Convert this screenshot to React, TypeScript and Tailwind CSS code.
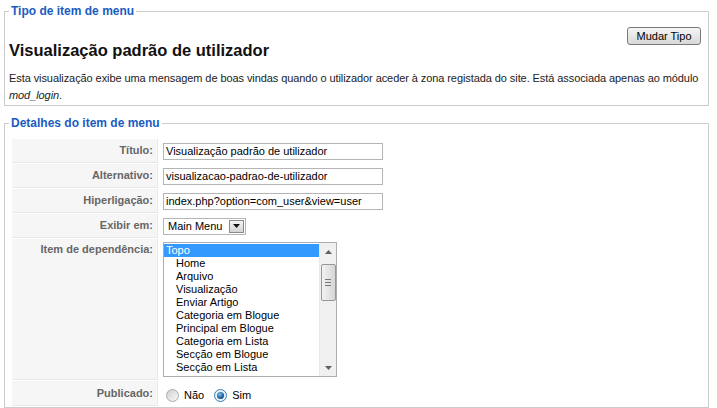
import React from "react";

const items = [
  "Home",
  "Arquivo",
  "Visualização",
  "Enviar Artigo",
  "Categoria em Blogue",
  "Principal em Blogue",
  "Categoria em Lista",
  "Secção em Blogue",
  "Secção em Lista",
  "",
];

function Label({ children, top = false }: { children: React.ReactNode; top?: boolean }) {
  return (
    <td
      className={`w-[146px] bg-[#f6f6f6] border-b border-r border-[#e9e9e9] text-right pr-[4px] font-bold text-[#666] text-[11px] leading-[13px] ${
        top ? "align-top pt-[4px]" : "align-middle"
      }`}
    >
      {children}
    </td>
  );
}

function TextInput({ value }: { value: string }) {
  return (
    <div className="w-[220px] h-[17px] border border-[#b5b5b5] bg-white px-[2px] text-[11px] leading-[15px] text-black whitespace-nowrap overflow-hidden">
      {value}
    </div>
  );
}

function Radio({ checked }: { checked?: boolean }) {
  return (
    <span
      className={`inline-flex items-center justify-center w-[13px] h-[13px] rounded-full border ${
        checked ? "border-[#3c7fb1] bg-[#e6f1fa]" : "border-[#a9a9a9] bg-gradient-to-br from-[#d0d0d0] to-[#fafafa]"
      }`}
    >
      {checked && (
        <span className="w-[7px] h-[7px] rounded-full bg-[radial-gradient(circle_at_40%_35%,#7fc4f0,#1a5a96_60%,#0d3d6e)]" />
      )}
    </span>
  );
}

export default function App() {
  return (
    <div className="w-[717px] h-[408px] overflow-hidden bg-white pl-[4px] pr-[8px] pt-[4px] text-[#333] font-['Liberation_Sans',Arial,sans-serif]">
      <fieldset className="border border-[#cccccc] pl-[4px] pr-[3px] pb-[1px]">
        <legend className="px-[2px] text-[12px] font-bold leading-[15px] text-[#1a5cc2]">
          Tipo de item de menu
        </legend>
        <div className="flex justify-between items-start pr-[4px]">
          <h2 className="mt-[21px] text-[16.5px] font-bold leading-[20px] text-[#111]">
            Visualização padrão de utilizador
          </h2>
          <button className="mt-[8px] w-[74px] h-[18px] rounded-[3px] border border-[#7a7a7a] bg-gradient-to-b from-[#f6f6f6] to-[#d8d8d8] text-[11px] leading-[16px] text-black">
            Mudar Tipo
          </button>
        </div>
        <p className="mt-[10px] text-[11px] leading-[17px] tracking-[-0.08px] text-[#222]">
          Esta visualização exibe uma mensagem de boas vindas quando o utilizador aceder à zona registada do site. Está
          associada apenas ao módulo <i>mod_login</i>.
        </p>
      </fieldset>

      <fieldset className="mt-[10px] border border-[#cccccc] pl-[4px] pr-[7px]">
        <legend className="px-[2px] text-[12px] font-bold leading-[15px] text-[#1a5cc2]">
          Detalhes do item de menu
        </legend>
        <table className="mt-[7px] ml-[2px] border-separate border-spacing-[1px] w-[690px]">
          <tbody>
            <tr className="h-[24px]">
              <Label>Título:</Label>
              <td className="pl-[4px] align-middle">
                <TextInput value="Visualização padrão de utilizador" />
              </td>
            </tr>
            <tr className="h-[24px]">
              <Label>Alternativo:</Label>
              <td className="pl-[4px] align-middle">
                <TextInput value="visualizacao-padrao-de-utilizador" />
              </td>
            </tr>
            <tr className="h-[24px]">
              <Label>Hiperligação:</Label>
              <td className="pl-[4px] align-middle">
                <TextInput value="index.php?option=com_user&view=user" />
              </td>
            </tr>
            <tr className="h-[24px]">
              <Label>Exibir em:</Label>
              <td className="pl-[4px] align-middle">
                <div className="flex items-center w-[83px] h-[17px] border border-[#b5b5b5] bg-white">
                  <span className="flex-1 pl-[4px] text-[11px] leading-[15px] text-black whitespace-nowrap">
                    Main Menu
                  </span>
                  <span className="flex items-center justify-center w-[15px] h-[13px] mr-[1px] border border-[#8a8a8a] bg-gradient-to-b from-[#f4f4f4] to-[#d4d4d4]">
                    <svg width="7" height="4" viewBox="0 0 7 4">
                      <path d="M0 0h7L3.5 4z" fill="#111" />
                    </svg>
                  </span>
                </div>
              </td>
            </tr>
            <tr>
              <Label top>Item de dependência:</Label>
              <td className="pl-[4px] py-[3px] align-top">
                <div className="flex w-[174px] h-[135px] border border-[#abadb3] bg-white overflow-hidden">
                  <div className="flex-1 overflow-hidden pt-[1px] text-[11px] leading-[13px] text-black">
                    <div className="h-[13px] bg-[#3399ff] text-white pl-[2px] whitespace-nowrap">Topo</div>
                    {items.map((it, i) => (
                      <div key={i} className="h-[13px] pl-[12px] whitespace-nowrap">
                        {it}
                      </div>
                    ))}
                  </div>
                  <div className="w-[17px] flex flex-col bg-[#f0f0f0] border-l border-[#e8e8e8]">
                    <div className="h-[17px] flex items-center justify-center">
                      <svg width="7" height="4" viewBox="0 0 7 4">
                        <path d="M0 4h7L3.5 0z" fill="#606060" />
                      </svg>
                    </div>
                    <div className="flex-1 pt-[4px] flex flex-col items-center">
                      <div className="w-[15px] h-[37px] rounded-[2px] border border-[#979797] bg-gradient-to-r from-[#f2f2f2] to-[#d6d6d6] flex flex-col items-center justify-center gap-[2px]">
                        <span className="w-[6px] h-[1px] bg-[#777]" />
                        <span className="w-[6px] h-[1px] bg-[#777]" />
                        <span className="w-[6px] h-[1px] bg-[#777]" />
                      </div>
                    </div>
                    <div className="h-[17px] flex items-center justify-center">
                      <svg width="7" height="4" viewBox="0 0 7 4">
                        <path d="M0 0h7L3.5 4z" fill="#606060" />
                      </svg>
                    </div>
                  </div>
                </div>
              </td>
            </tr>
            <tr className="h-[25px]">
              <Label>Publicado:</Label>
              <td className="pl-[4px] align-middle">
                <div className="mt-[4px] ml-[3px] flex items-center text-[11px] leading-[13px] text-black">
                  <Radio />
                  <span className="ml-[5px]">Não</span>
                  <span className="ml-[10px]">
                    <Radio checked />
                  </span>
                  <span className="ml-[5px]">Sim</span>
                </div>
              </td>
            </tr>
          </tbody>
        </table>
      </fieldset>
    </div>
  );
}
